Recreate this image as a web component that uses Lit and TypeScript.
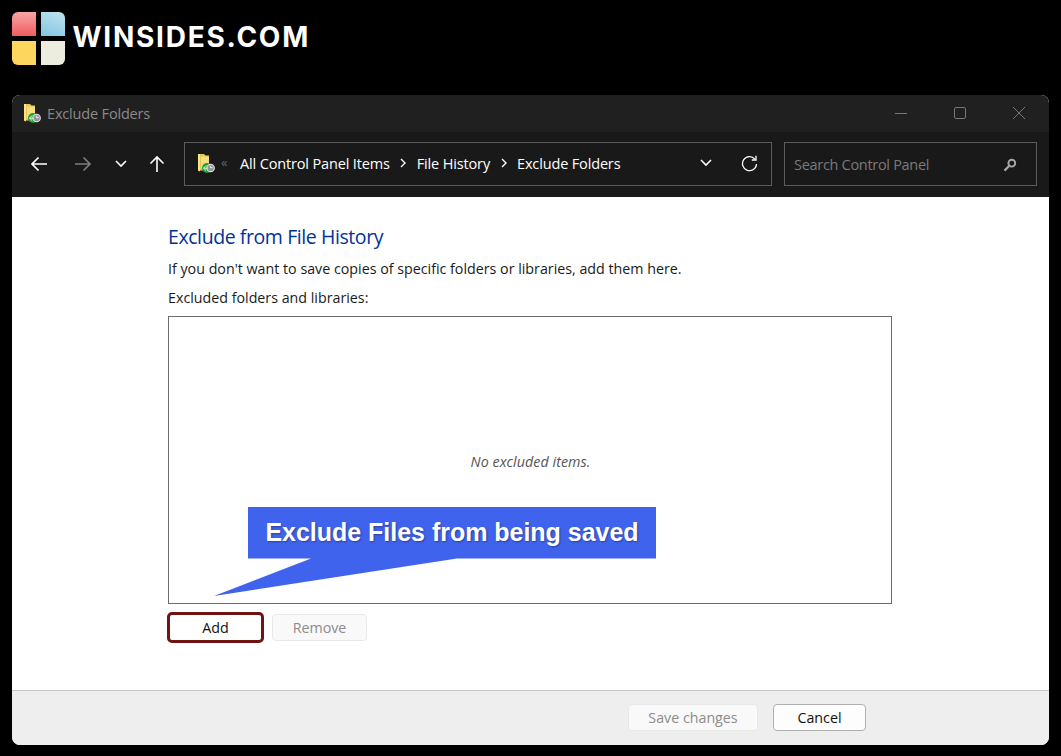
import { LitElement, html, css, svg } from "lit";
import { customElement } from "lit/decorators.js";

const folderIcon = () => html`<svg class="ficon" width="17" height="19" viewBox="0 0 17 19">
  <path d="M0 0h6l1.500 1.500H11v15H0z" fill="#e8c64c"/>
  <path d="M0 0h2v17.500L0 16.500z" fill="#f9e68c"/>
  <path d="M3 2.500h7l1 1.500v10H3z" fill="#f5dd85"/>
  <circle cx="9" cy="14" r="5" fill="#1f9e33"/>
  <circle cx="12.600" cy="14" r="4.300" fill="#e6e6e6"/>
  <circle cx="12.600" cy="14" r="3.200" fill="#8f9696"/>
  <path d="M12 11.800l1 2.200 1.600-.8" stroke="#fff" stroke-width=".9" fill="none"/>
  <path d="M5.500 14.200l2.600-2.600M5.500 14.200l2.600 2.400M5.500 14.200h4" stroke="#e8f7e8" stroke-width="1" fill="none"/>
</svg>`;

const chev = svg`<path d="M1 1l5 5 5-5" fill="none" stroke="currentColor" stroke-width="1.600"/>`;
const sep = html`<svg class="sep" width="6" height="10" viewBox="0 0 6 10"><path d="M1 1l4 4-4 4" fill="none" stroke="#fff" stroke-width="1.400"/></svg>`;

@customElement("app-root")
export class AppRoot extends LitElement {
  static styles = css`
    :host { display: block; width: 1061px; height: 756px; background: #000; overflow: hidden; font-family: "Open Sans", "Noto Sans", sans-serif; }
    .brand { height: 95px; box-sizing: border-box; padding: 12px 0 0 12px; display: flex; align-items: flex-start; gap: 8px; }
    .logo { display: grid; grid-template-columns: 24px 24px; grid-template-rows: 24px 24px; gap: 4.500px; width: 52.500px; height: 52.500px; }
    .logo i { display: block; }
    .l1 { background: linear-gradient(180deg, #f9a5a5, #ee5d60); border-top-left-radius: 6px; }
    .l2 { background: linear-gradient(200deg, #bfe2f0, #84c6e3); border-top-right-radius: 6px; }
    .l3 { background: #fdd65e; border-bottom-left-radius: 6px; }
    .l4 { background: #ececdf; border-bottom-right-radius: 6px; }
    .brandname { color: #fff; font-family: "Inter", sans-serif; font-weight: 700; font-size: 28px; line-height: 36px; margin-top: 7px; letter-spacing: 1.750px; }
    .win { margin: 0 12px; width: 1037px; height: 650px; border-radius: 8px; overflow: hidden; display: flex; flex-direction: column; background: #fff; }
    .title { height: 37px; flex: none; background: #202020; display: flex; align-items: center; padding: 0 1px 0 12px; color: #8a8a8a; font-size: 14.500px; letter-spacing: -0.170px; }
    .title .ficon { margin-right: 6px; }
    .title .ttext { flex: 1; margin-top: -1px; }
    .ctl { width: 59px; display: flex; justify-content: center; margin-top: -2px; }
    .ctl svg { display: block; }
    .nav { height: 65px; flex: none; background: #191919; display: flex; align-items: flex-start; padding: 10px 12px 0 18px; box-sizing: border-box; color: #fff; }
    .navbtns { display: flex; align-items: center; width: 154px; height: 44px; }
    .navbtns svg { display: block; flex: none; }
    .navbtns .b1 { margin-right: 26px; }
    .navbtns .b2 { margin-right: 23px; }
    .navbtns .b3 { margin-right: 22px; }
    .addr { width: 588px; height: 44px; box-sizing: border-box; border: 1px solid #5b5b5b; display: flex; align-items: center; padding: 0 0 2px 13px; font-size: 14.500px; letter-spacing: -0.150px; color: #fff; }
    .addr .ficon { margin-right: 6px; }
    .addr .dbl { color: #666; font-size: 13px; width: 19px; flex: none; margin-top: -3px; letter-spacing: 0; }
    .sep { margin: 0 10.500px; flex: none; }
    .addr .spacer { flex: 1; }
    .addr .dn { margin-right: 29px; }
    .addr .ref { margin-right: 13px; }
    .search { width: 253px; height: 44px; margin-left: 12px; box-sizing: border-box; border: 1px solid #5b5b5b; display: flex; align-items: center; padding: 1px 19px 0 9px; color: #7a7a7a; font-size: 14.500px; letter-spacing: -0.300px; justify-content: space-between; }
    .main { flex: 1; box-sizing: border-box; padding: 26px 0 0 156px; color: #1a1a1a; font-size: 14.250px; }
    h1 { margin: 0; font-weight: 400; font-size: 19.500px; line-height: 27px; color: #003399; letter-spacing: -0.420px; }
    p { margin: 0; line-height: 20px; }
    .p1 { margin-top: 9px; }
    .p2 { margin-top: 9px; }
    .list { position: relative; margin-top: 8px; width: 724px; height: 288px; box-sizing: border-box; border: 1px solid #6b6b6b; display: flex; align-items: center; justify-content: center; font-style: italic; color: #555; padding: 2px 0 0 1px; letter-spacing: 0.060px; }
    .callout { position: absolute; left: 44px; top: 190px; width: 450px; height: 90px; }
    .callout svg { position: absolute; left: 0; top: 0; }
    .callout .ct { position: absolute; left: 35px; top: 0; width: 408px; height: 51px; display: flex; align-items: center; justify-content: center; color: #fff; font-family: "Liberation Sans", sans-serif; font-style: normal; font-weight: 700; font-size: 25px; letter-spacing: -0.020px; text-shadow: 1px 1px 2px rgba(0,0,0,.35); white-space: nowrap; }
    .btns { display: flex; align-items: flex-start; gap: 8px; margin-top: 10px; }
    .btn { box-sizing: border-box; height: 27px; border-radius: 4px; display: flex; align-items: center; justify-content: center; font-size: 14.250px; background: #fbfbfb; border: 1px solid #bdbdbd; color: #111; }
    .btn.dis { border-color: #e8e8e8; background: #f9f9f9; color: #8c8c8c; }
    .btn.add { width: 97px; height: 31px; margin: -2px 0 0 -1px; border: 3px solid #6f1313; border-radius: 5px; background: #fff; }
    .btn.rem { width: 95px; }
    .foot { height: 55px; flex: none; box-sizing: border-box; background: #eeeeee; border-top: 1px solid #c9c9c9; display: flex; align-items: flex-start; padding: 13px 0 0 616px; gap: 15px; color: #111; }
    .foot .save { width: 130px; }
    .foot .cancel { width: 93px; background: #fdfdfd; border-color: #b0b0b0; }
  `;

  render() {
    return html`
      <div class="brand">
        <div class="logo"><i class="l1"></i><i class="l2"></i><i class="l3"></i><i class="l4"></i></div>
        <div class="brandname">WINSIDES.COM</div>
      </div>
      <div class="win">
        <div class="title">
          ${folderIcon()}
          <span class="ttext">Exclude Folders</span>
          <span class="ctl"><svg width="14" height="14" viewBox="0 0 14 14"><path d="M1 7.500h12" stroke="#767676"/></svg></span>
          <span class="ctl"><svg width="14" height="14" viewBox="0 0 14 14"><rect x="1.500" y="1.500" width="11" height="11" rx="1.500" fill="none" stroke="#767676"/></svg></span>
          <span class="ctl"><svg width="14" height="14" viewBox="0 0 14 14"><path d="M1 1l12 12M13 1L1 13" stroke="#767676" fill="none"/></svg></span>
        </div>
        <div class="nav">
          <div class="navbtns">
            <svg class="b1" width="18" height="16" viewBox="0 0 18 16"><path d="M17 8H2M8.500 1.500L2 8l6.500 6.500" fill="none" stroke="#fff" stroke-width="1.700"/></svg>
            <svg class="b2" width="18" height="16" viewBox="0 0 18 16"><path d="M1 8h15M9.500 1.500L16 8l-6.500 6.500" fill="none" stroke="#7d7d7d" stroke-width="1.700"/></svg>
            <svg class="b3" width="12" height="8" viewBox="0 0 12 8" style="color:#fff">${chev}</svg>
            <svg width="16" height="18" viewBox="0 0 16 18"><path d="M8 17V2M1.500 8.500L8 2l6.500 6.500" fill="none" stroke="#fff" stroke-width="1.600"/></svg>
          </div>
          <div class="addr">
            ${folderIcon()}
            <span class="dbl">«</span>
            <span>All Control Panel Items</span>${sep}
            <span>File History</span>${sep}
            <span>Exclude Folders</span>
            <span class="spacer"></span>
            <svg class="dn" width="12" height="8" viewBox="0 0 12 8" style="color:#fff">${chev}</svg>
            <svg class="ref" width="17" height="17" viewBox="0 0 17 17"><path d="M13.900 4.200A7 7 0 1 0 15.500 9" fill="none" stroke="#fff" stroke-width="1.300"/><path d="M15 0.800v4.200h-4.200" fill="none" stroke="#fff" stroke-width="1.300"/></svg>
          </div>
          <div class="search">
            <span>Search Control Panel</span>
            <svg width="14" height="14" viewBox="0 0 14 14"><circle cx="8.800" cy="5.200" r="3.400" fill="none" stroke="#a8a8a8" stroke-width="1.900"/><path d="M6.300 7.800L1.500 12.600" stroke="#a8a8a8" stroke-width="2.200"/></svg>
          </div>
        </div>
        <div class="main">
          <h1>Exclude from File History</h1>
          <p class="p1">If you don't want to save copies of specific folders or libraries, add them here.</p>
          <p class="p2">Excluded folders and libraries:</p>
          <div class="list">
            <span>No excluded items.</span>
            <div class="callout">
              <svg width="450" height="90" viewBox="0 0 450 90"><path d="M35 0H443V51.500H244L1 89L98 51.500H35z" fill="#4063ee"/></svg>
              <div class="ct">Exclude Files from being saved</div>
            </div>
          </div>
          <div class="btns">
            <div class="btn add">Add</div>
            <div class="btn dis rem">Remove</div>
          </div>
        </div>
        <div class="foot">
          <div class="btn dis save">Save changes</div>
          <div class="btn cancel">Cancel</div>
        </div>
      </div>
    `;
  }
}
